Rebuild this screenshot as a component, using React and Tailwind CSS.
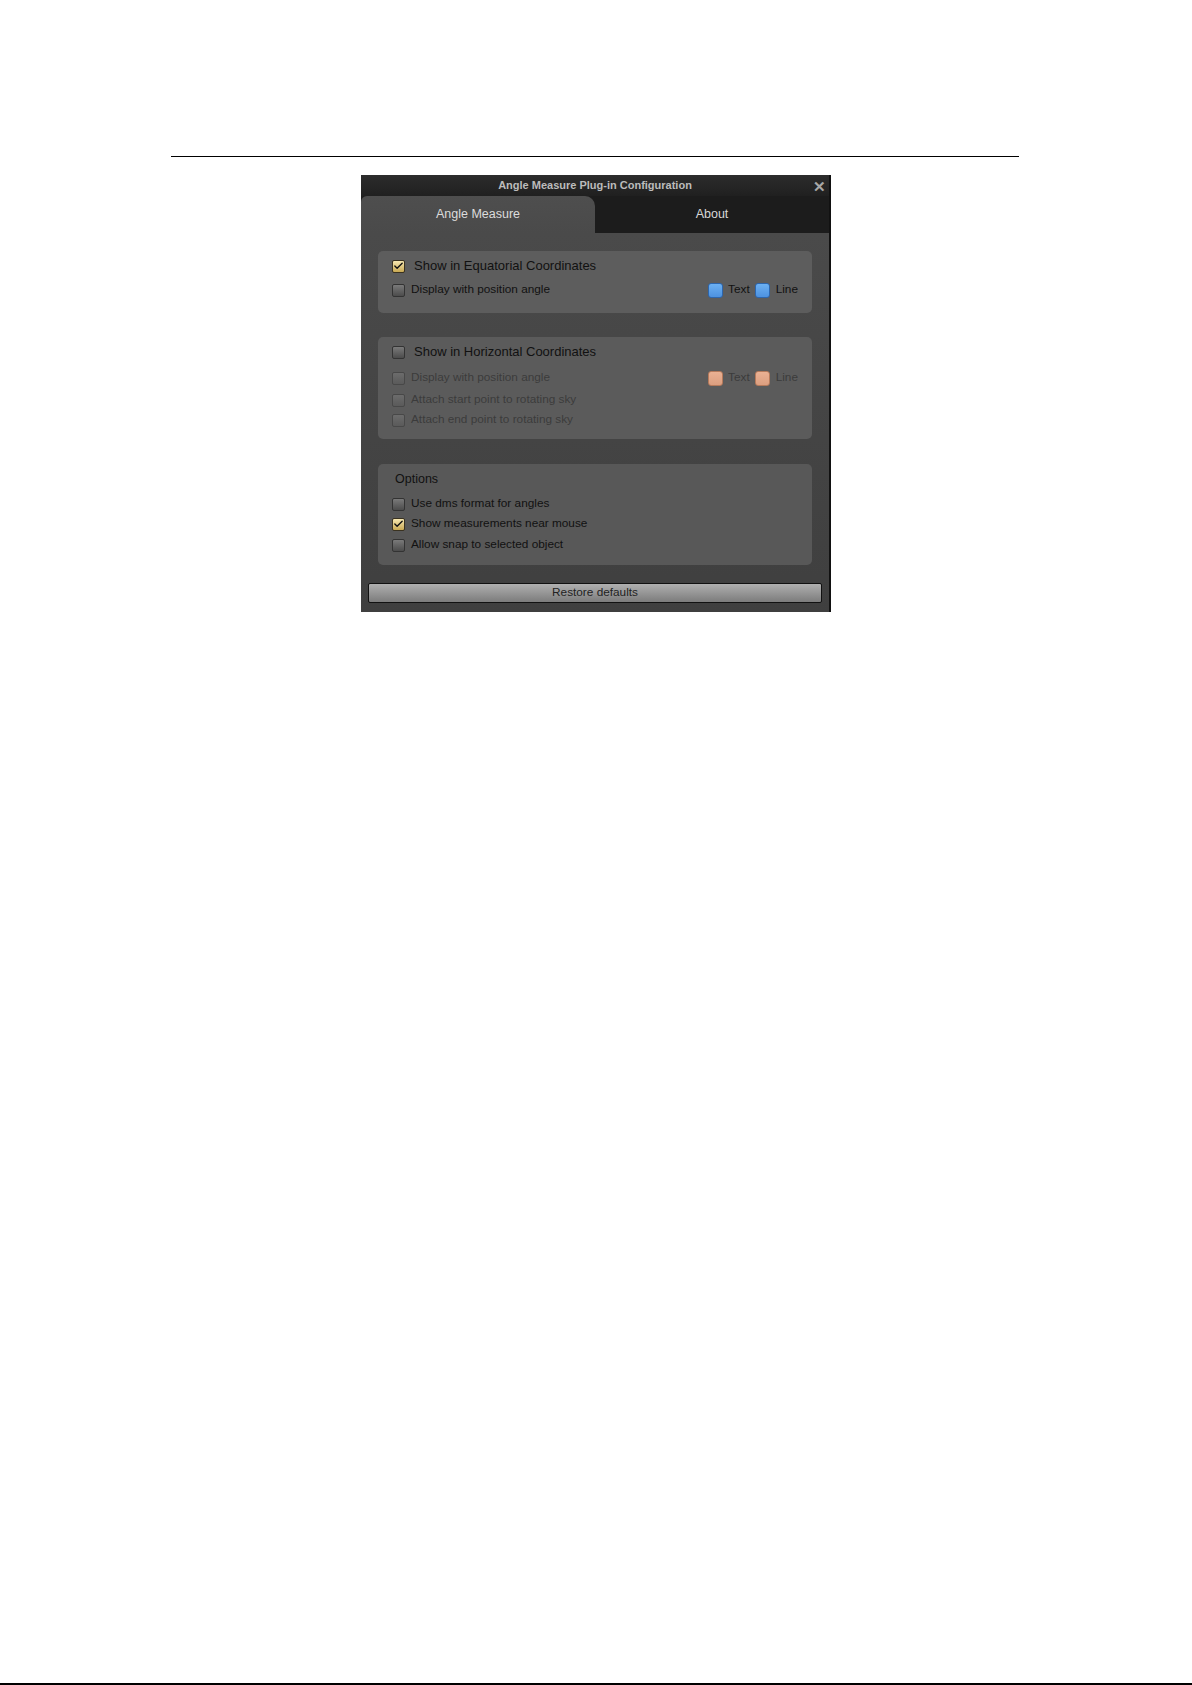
import { Check } from 'lucide-react'

const font = { fontFamily: '"Liberation Sans", Arial, sans-serif' }

function Box({ checked, dim }) {
  return (
    <span
      className={
        'inline-flex items-center justify-center w-[13px] h-[13px] rounded-[2px] border shrink-0 ' +
        (checked
          ? 'border-[#3a3220] bg-gradient-to-b from-[#f7e8b0] to-[#c9a952]'
          : dim
            ? 'border-[#484848] bg-gradient-to-b from-[#6c6c6c] to-[#5a5a5a]'
            : 'border-[#333] bg-gradient-to-b from-[#7a7a7a] to-[#4c4c4c]')
      }
    >
      {checked && <Check size={12} strokeWidth={3} className="text-[#111] -mt-[1px]" />}
    </span>
  )
}

function Swatch({ color }) {
  const cls =
    color === 'blue'
      ? 'bg-gradient-to-b from-[#6cb0f2] to-[#4d92e0] border-[#2d66ad]'
      : 'bg-gradient-to-b from-[#eab193] to-[#dc9f80] border-[#b57a5b]'
  return <span className={'block shrink-0 w-[15px] h-[15px] rounded-[3px] border ' + cls} />
}

function Row({ label, checked, dim, title, h = 20, extra }) {
  return (
    <div
      className={
        'flex items-center ' +
        (h === 22 ? 'h-[22px]' : h === 24 ? 'h-[24px] pt-[2px]' : 'h-[20px] pt-[2px]')
      }
    >
      <Box checked={checked} dim={dim} />
      <span
        className={
          title
            ? 'ml-[9px] text-[13px] text-[#111]'
            : dim
              ? 'ml-[6px] text-[11.8px] text-[#3b3b3b]'
              : 'ml-[6px] text-[11.8px] text-[#111]'
        }
      >
        {label}
      </span>
      {extra}
    </div>
  )
}

function Colors({ color, dim }) {
  const t = dim ? 'text-[#3b3b3b]' : 'text-[#111]'
  return (
    <div className="ml-auto flex items-center">
      <Swatch color={color} />
      <span className={'ml-[5px] text-[11.8px] ' + t}>Text</span>
      <span className="ml-[5px] flex items-center">
        <Swatch color={color} />
      </span>
      <span className={'ml-[6px] text-[11.8px] ' + t}>Line</span>
    </div>
  )
}

export default function App() {
  return (
    <div className="min-h-[1685px] bg-white flex flex-col" style={font}>
      <div className="mt-[156px] ml-[171px] w-[848px] h-px bg-black" />

      <div className="mt-[18px] ml-[361px] w-[470px] h-[437px] flex flex-col border-r-2 border-[#111] bg-[#1e1e1e]">
        <div className="relative h-[21px] flex items-center justify-center bg-gradient-to-b from-[#2c2c2c] to-[#202020]">
          <span className="text-[11px] font-bold text-[#bcbcbc]">Angle Measure Plug-in Configuration</span>
          <span className="absolute right-[3px] top-[1px] text-[15px] font-bold text-[#a8a8a8]">✕</span>
        </div>

        <div className="h-[37px] flex bg-[#1c1c1c]">
          <div className="w-[234px] flex items-center justify-center rounded-tl-[6px] rounded-tr-[10px] bg-gradient-to-b from-[#4e4e4e] to-[#4a4a4a]">
            <span className="text-[12.5px] text-[#dcdcdc]">Angle Measure</span>
          </div>
          <div className="flex-1 flex items-center justify-center">
            <span className="text-[12.5px] text-[#d8d8d8]">About</span>
          </div>
        </div>

        <div className="flex-1 flex flex-col px-[17px] pt-[18px] bg-gradient-to-b from-[#4a4a4a] to-[#3f3f3f]">
          <div className="h-[62px] rounded-[5px] bg-[#5d5d5d] pl-[14px] pr-[14px] pt-[4px]">
            <Row label="Show in Equatorial Coordinates" checked title h={22} />
            <Row label="Display with position angle" h={24} extra={<Colors color="blue" />} />
          </div>

          <div className="mt-[24px] h-[102px] rounded-[5px] bg-[#5b5b5b] pl-[14px] pr-[14px] pt-[4px]">
            <Row label="Show in Horizontal Coordinates" title h={22} />
            <div className="mt-[4px]">
              <Row label="Display with position angle" dim extra={<Colors color="orange" dim />} />
            </div>
            <div className="mt-[2px]">
              <Row label="Attach start point to rotating sky" dim />
            </div>
            <Row label="Attach end point to rotating sky" dim />
          </div>

          <div className="mt-[25px] h-[101px] rounded-[5px] bg-[#585858] pl-[14px] pr-[14px] pt-[4px]">
            <div className="h-[22px] flex items-center pl-[3px] text-[12.5px] text-[#111]">Options</div>
            <div className="mt-[3px]">
              <Row label="Use dms format for angles" />
            </div>
            <Row label="Show measurements near mouse" checked />
            <div className="mt-[1px]">
              <Row label="Allow snap to selected object" />
            </div>
          </div>

          <div className="mt-[18px] -mx-[10px] h-[20px] flex items-center justify-center border border-[#111] rounded-[2px] bg-gradient-to-b from-[#b0b0b0] to-[#7c7c7c]">
            <span className="text-[11.8px] text-[#222]">Restore defaults</span>
          </div>
        </div>
      </div>

      <div className="mt-auto h-[2px] bg-black" />
    </div>
  )
}
